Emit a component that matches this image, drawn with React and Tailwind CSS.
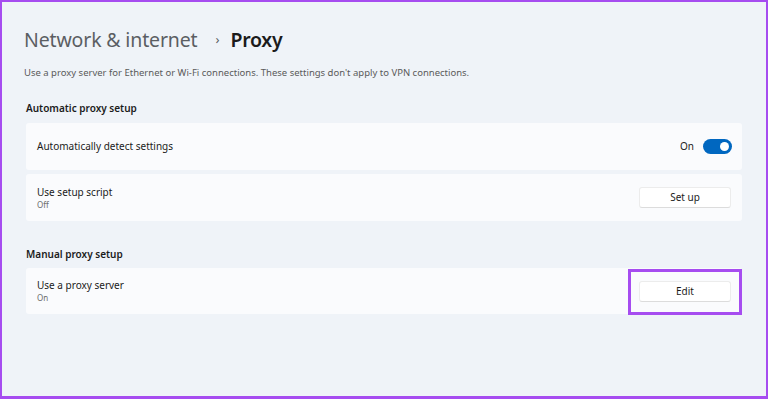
import React, { useState } from "react";

function Toggle({ on, onChange }) {
  return (
    <button
      onClick={() => onChange(!on)}
      className={`relative w-[29px] h-[15px] rounded-full ${on ? "bg-[#0067c0]" : "bg-white border border-[#888]"}`}
    >
      <span
        className={`absolute top-[3px] w-[9px] h-[9px] rounded-full bg-white ${on ? "right-[3px]" : "left-[3px] bg-[#555]"}`}
      />
    </button>
  );
}

function SettingButton({ children }) {
  return (
    <button className="w-[92px] h-[21px] rounded-[3px] bg-white border border-[#ececec] border-b-[#dcdcdc] text-[10px] text-[#1b1b1b]">
      {children}
    </button>
  );
}

export default function App() {
  const [autoDetect, setAutoDetect] = useState(true);

  return (
    <div
      className="w-[768px] h-[399px] border-2 border-b-[3px] border-[#a64cf0] bg-[#eff3f8] overflow-hidden"
      style={{ fontFamily: '"Noto Sans", "Open Sans", sans-serif' }}
    >
      <div className="pl-[22px] pr-[24px] pt-[22px]">
        {/* Header */}
        <div className="flex items-center h-[32px]">
          <span className="text-[19.5px] text-[#5b5e63] tracking-[-0.15px]">Network &amp; internet</span>
          <span className="ml-[18px] mr-[11px] text-[13px] text-[#5b5e63]">›</span>
          <span className="text-[19.5px] font-semibold text-[#1b1b1b] tracking-[-0.3px]">Proxy</span>
        </div>

        <p className="mt-[10px] text-[9.5px] text-[#5a5a5a] leading-[14px]">
          Use a proxy server for Ethernet or Wi-Fi connections. These settings don't apply to VPN connections.
        </p>

        {/* Automatic */}
        <h2 className="mt-[21px] ml-[2px] text-[10px] font-semibold text-[#1b1b1b] leading-[14px]">
          Automatic proxy setup
        </h2>
        <div className="mt-[8px] ml-[2px] flex flex-col gap-[4px]">
          <div className="h-[47px] bg-[#fafbfd] rounded-[3px] flex items-center justify-between pl-[11px] pr-[10px]">
            <span className="text-[10px] text-[#1b1b1b]">Automatically detect settings</span>
            <div className="flex items-center gap-[9px]">
              <span className="text-[10px] text-[#1b1b1b]">{autoDetect ? "On" : "Off"}</span>
              <Toggle on={autoDetect} onChange={setAutoDetect} />
            </div>
          </div>
          <div className="h-[47px] bg-[#fafbfd] rounded-[3px] flex items-center justify-between pl-[11px] pr-[11px]">
            <div className="flex flex-col">
              <span className="text-[10px] text-[#1b1b1b] leading-[13px]">Use setup script</span>
              <span className="text-[8px] text-[#6b6b6b] leading-[11px]">Off</span>
            </div>
            <SettingButton>Set up</SettingButton>
          </div>
        </div>

        {/* Manual */}
        <h2 className="mt-[26px] ml-[2px] text-[10px] font-semibold text-[#1b1b1b] leading-[14px]">
          Manual proxy setup
        </h2>
        <div className="mt-[7px] ml-[2px] relative">
          <div className="h-[46px] bg-[#fafbfd] rounded-[3px] flex items-center justify-between pl-[11px] pr-[11px]">
            <div className="flex flex-col">
              <span className="text-[10px] text-[#1b1b1b] leading-[13px]">Use a proxy server</span>
              <span className="text-[8px] text-[#6b6b6b] leading-[11px]">On</span>
            </div>
            <SettingButton>Edit</SettingButton>
          </div>
          <div className="absolute right-0 top-[1px] w-[114px] h-[46px] border-[3px] border-[#a64cf0] pointer-events-none" />
        </div>
      </div>
    </div>
  );
}
